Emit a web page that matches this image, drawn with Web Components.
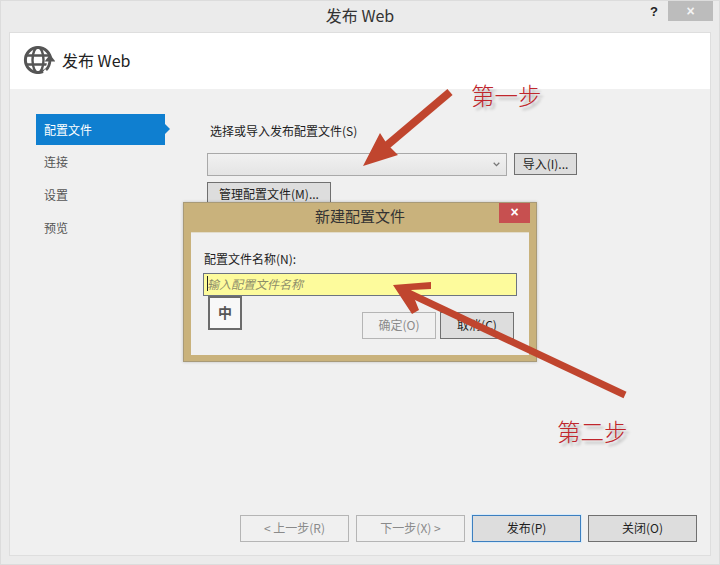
<!DOCTYPE html>
<html>
<head>
<meta charset="utf-8">
<style>
  html, body { margin: 0; padding: 0; height: 100%; background: #f0f0f0; }
  body { font: 12px "Noto Sans CJK SC", "Liberation Sans", sans-serif; color: #1e1e1e; overflow: hidden; }
</style>
</head>
<body>
<template id="window-tpl">
  <style>
    :host {
      display: grid;
      grid-template-rows: 30px 1fr;
      height: 565px;
      width: 720px;
      box-sizing: border-box;
      border: 1px solid #dcdcdc;
      background: #ebebeb;
      position: relative;
    }
    .title {
      display: flex;
      align-items: center;
      justify-content: center;
      padding-bottom: 2px;
      box-sizing: border-box;
      font-size: 16px;
      color: #333;
      position: relative;
    }
    .caption {
      display: flex;
      position: absolute;
      top: 0;
      right: 6px;
      height: 20px;
    }
    .help { width: 28px; text-align: center; font: bold 13px/21px "Liberation Sans", sans-serif; color: #222; }
    .close {
      width: 45px;
      background: #bcbcbc;
      color: #f4f4f4;
      text-align: center;
      font: bold 14px/20px "Liberation Sans", sans-serif;
    }
    .client {
      margin: 1px 8px 8px 8px;
      border: 1px solid #dedede;
      background: #f0f0f0;
      display: grid;
      grid-template-rows: 56px 1fr auto;
      min-height: 0;
    }
  </style>
  <div class="title">
    <span><slot name="title"></slot></span>
    <div class="caption"><div class="help">?</div><div class="close">×</div></div>
  </div>
  <div class="client">
    <slot name="header"></slot>
    <slot name="main"></slot>
    <slot name="footer"></slot>
  </div>
  <slot name="overlay"></slot>
</template>

<template id="header-tpl">
  <style>
    :host {
      display: flex;
      align-items: center;
      gap: 7px;
      background: #fff;
      padding: 0 0 2px 13px;
      box-sizing: border-box;
      font-size: 16px;
      color: #222;
    }
    svg { display: block; margin-top: 2px; }
  </style>
  <svg width="32" height="32" viewBox="0 0 32 32" fill="none" stroke="#555">
    <circle cx="15" cy="15" r="12.6" stroke-width="3"/>
    <ellipse cx="15" cy="15" rx="5.5" ry="12.6" stroke-width="2.4"/>
    <path d="M3 10.5h24M3 19.5h24" stroke-width="2.4"/>
    <path d="M22 29c4-4 5-8 5-14" stroke="#fff" stroke-width="6"/>
    <path d="M23 25c3-3 4-6 4-11" stroke="#555" stroke-width="2.8"/>
    <path d="M21.6 16.5L27 9.5l5.4 7z" fill="#555" stroke="none"/>
  </svg>
  <span><slot></slot></span>
</template>

<template id="nav-tpl">
  <style>
    :host {
      display: block;
      height: 33px;
      width: 129px;
      box-sizing: border-box;
      padding-left: 8px;
      line-height: 29px;
      font-size: 12px;
      color: #555;
      position: relative;
    }
    :host([selected]) {
      background: #0f7fd0;
      color: #fff;
      height: 31px;
      line-height: 31px;
      margin-bottom: 2px;
    }
    :host([selected])::after {
      content: '';
      position: absolute;
      left: 100%;
      top: 10px;
      border: 5px solid transparent;
      border-left-color: #0f7fd0;
      border-right-width: 0;
    }
  </style>
  <slot></slot>
</template>

<template id="button-tpl">
  <style>
    :host {
      display: inline-flex;
      align-items: center;
      justify-content: center;
      box-sizing: border-box;
      height: 27px;
      width: 109px;
      padding-bottom: 2px;
      border: 1px solid #707070;
      background: #dddddd;
      font-size: 12px;
      color: #1e1e1e;
      white-space: pre;
    }
    :host([disabled]) {
      background: #f0f0f0;
      border-color: #b5b5b5;
      color: #8a8a8a;
    }
    :host([primary]) {
      border-color: #3d7fbf;
      box-shadow: 0 0 0 1px #d8ebfa;
    }
  </style>
  <slot></slot>
</template>

<template id="combo-tpl">
  <style>
    :host {
      display: flex;
      align-items: center;
      justify-content: flex-end;
      box-sizing: border-box;
      width: 300px;
      height: 23px;
      padding-right: 6px;
      border: 1px solid #a9a9a9;
      background: linear-gradient(#f1f1f1, #e4e4e4);
    }
    svg { display: block; }
  </style>
  <svg width="7" height="5" viewBox="0 0 7 5" fill="none" stroke="#777" stroke-width="1.3"><path d="M.7.8l2.8 2.8L6.3.8"/></svg>
</template>

<template id="dialog-tpl">
  <style>
    :host {
      display: block;
      position: absolute;
      left: 182px;
      top: 201px;
      width: 354px;
      height: 160px;
      box-sizing: border-box;
      background: #c9b27c;
      border: 1px solid #a89a78;
      box-shadow: 0 0 3px rgba(0,0,0,.2);
    }
    .bar {
      height: 29px;
      display: flex;
      align-items: center;
      justify-content: center;
      padding-bottom: 4px;
      box-sizing: border-box;
      font-size: 15px;
      color: #333;
      position: relative;
    }
    .x {
      position: absolute;
      top: 0;
      right: 6px;
      width: 31px;
      height: 20px;
      background: #c75050;
      color: #fff;
      text-align: center;
      font: bold 14px/19px "Liberation Sans", sans-serif;
    }
    .body {
      margin: 0 7px;
      height: 123px;
      box-sizing: border-box;
      background: #f0f0f0;
      border-top: 1px solid #e2dccb;
      padding: 18px 12px 0 12px;
      position: relative;
    }
    .label { height: 22px; padding-left: 1px; line-height: 15px; font-size: 12px; color: #222; }
    .input {
      height: 23px;
      box-sizing: border-box;
      border: 1px solid #6d7480;
      background: #fdfb9c;
      display: flex;
      align-items: center;
      padding: 0 0 2px 3px;
      font-size: 12px;
      font-style: italic;
      color: #8d8d6a;
    }
    .input i { width: 1px; height: 15px; background: #222; margin-right: -1px; }
    .ime {
      position: absolute;
      left: 17px;
      top: 63px;
      width: 34px;
      height: 34px;
      box-sizing: border-box;
      border: 2px solid #6b6b6b;
      padding-bottom: 2px;
      background: #f8f8f8;
      display: flex;
      align-items: center;
      justify-content: center;
      font-size: 14px;
      font-weight: bold;
      color: #555;
    }
    .actions {
      display: flex;
      justify-content: flex-end;
      gap: 4px;
      margin-top: 16px;
      padding-right: 3px;
    }
    .actions ::slotted(*) { width: 74px; }
  </style>
  <div class="bar"><slot name="title"></slot><div class="x">×</div></div>
  <div class="body">
    <div class="label"><slot name="label"></slot></div>
    <div class="input"><i></i><slot name="placeholder"></slot></div>
    <div class="ime">中</div>
    <div class="actions"><slot name="actions"></slot></div>
  </div>
</template>

<template id="notes-tpl">
  <style>
    :host {
      display: block;
      position: absolute;
      left: -1px;
      top: -1px;
      width: 720px;
      height: 565px;
      pointer-events: none;
    }
    svg { position: absolute; left: 0; top: 0; }
    .step {
      position: absolute;
      font-size: 23.5px;
      line-height: 30px;
      font-weight: 300;
      color: #c0262c;
      text-shadow: 3px 3px 3px rgba(0,0,0,.28);
      white-space: pre;
    }
    .one { left: 471px; top: 80px; }
    .two { left: 557px; top: 416px; }
  </style>
  <svg width="720" height="565" viewBox="0 0 720 565" fill="none" stroke="#c0452e" stroke-linecap="butt" stroke-linejoin="miter">
    <path d="M450 92L372 158" stroke-width="8"/>
    <path d="M363 166l17-33 7 11 11 11z" fill="#c0452e" stroke="none"/>
    <path d="M625 395L400 289" stroke-width="7"/>
    <path d="M393 285l38-3v7l-20 1 8 20-7 4z" fill="#c0452e" stroke="none"/>
  </svg>
  <div class="step one">第一步</div>
  <div class="step two">第二步</div>
</template>

<template id="main-tpl">
  <style>
    :host {
      display: grid;
      grid-template-columns: 197px 1fr;
      padding-top: 25px;
      min-height: 0;
    }
    nav { padding-left: 26px; }
    section { min-width: 0; }
    .label { height: 39px; padding-left: 3px; line-height: 34px; font-size: 12px; color: #222; }
    .row { display: flex; gap: 7px; margin-bottom: 6px; }
    .row ::slotted(x-button) { height: 22px; }
  </style>
  <nav><slot name="nav"></slot></nav>
  <section>
    <div class="label"><slot name="label"></slot></div>
    <div class="row"><slot name="combo"></slot></div>
    <div class="row"><slot name="manage"></slot></div>
  </section>
</template>

<template id="footer-tpl">
  <style>
    :host {
      display: flex;
      justify-content: flex-end;
      gap: 7px;
      padding: 0 13px 13px 0;
    }
  </style>
  <slot></slot>
</template>

<x-window>
  <span slot="title">发布 Web</span>
  <x-header slot="header">发布 Web</x-header>
  <x-main slot="main">
    <x-nav slot="nav" selected>配置文件</x-nav>
    <x-nav slot="nav">连接</x-nav>
    <x-nav slot="nav">设置</x-nav>
    <x-nav slot="nav">预览</x-nav>
    <span slot="label">选择或导入发布配置文件(S)</span>
    <x-combo slot="combo"></x-combo>
    <x-button slot="combo" style="width:63px">导入(I)...</x-button>
    <x-button slot="manage" style="width:124px;height:24px">管理配置文件(M)...</x-button>
  </x-main>
  <x-footer slot="footer">
    <x-button disabled>&lt; 上一步(R)</x-button>
    <x-button disabled>下一步(X) &gt;</x-button>
    <x-button primary>发布(P)</x-button>
    <x-button>关闭(O)</x-button>
  </x-footer>
  <x-dialog slot="overlay">
    <span slot="title">新建配置文件</span>
    <span slot="label">配置文件名称(N):</span>
    <span slot="placeholder">输入配置文件名称</span>
    <x-button slot="actions" disabled>确定(O)</x-button>
    <x-button slot="actions">取消(C)</x-button>
  </x-dialog>
  <x-notes slot="overlay"></x-notes>
</x-window>

<script>
  function register (name, tplId) {
    let template = document.getElementById(tplId)
    customElements.define(name, class extends HTMLElement {
      constructor () {
        super()
        this.attachShadow({ mode: 'open' })
          .appendChild(template.content.cloneNode(true))
      }
    })
  }

  register('x-window', 'window-tpl')
  register('x-header', 'header-tpl')
  register('x-main', 'main-tpl')
  register('x-nav', 'nav-tpl')
  register('x-button', 'button-tpl')
  register('x-combo', 'combo-tpl')
  register('x-footer', 'footer-tpl')
  register('x-dialog', 'dialog-tpl')
  register('x-notes', 'notes-tpl')
</script>
</body>
</html>
